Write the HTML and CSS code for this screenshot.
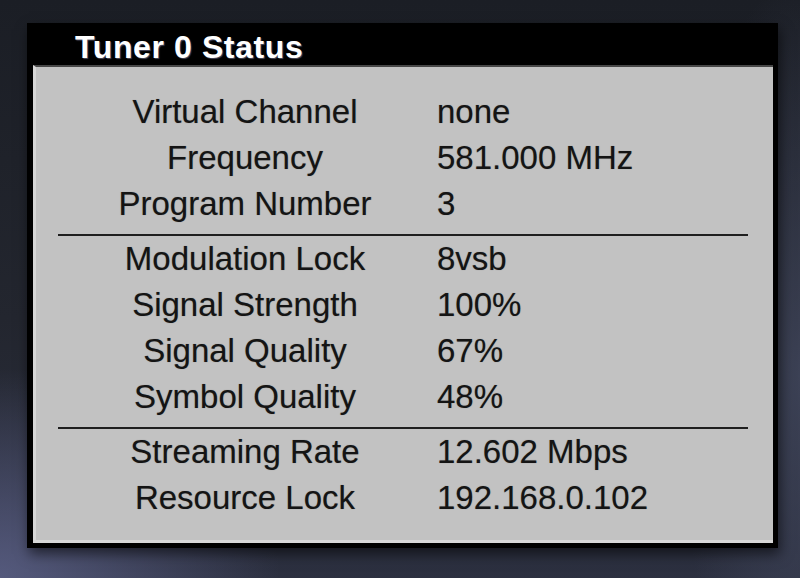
FILE: index.html
```html
<!DOCTYPE html>
<html lang="en">
<head>
    <meta charset="UTF-8">
    <meta name="viewport" content="width=device-width, initial-scale=1.0">
    <title>Tuner 0 Status</title>
    <link rel="stylesheet" href="styles.css">
</head>
<body>
    <div class="panel">
        <div class="panel-title">Tuner 0 Status</div>
        <div class="panel-body">
            <div class="status-grid">
                <div class="label">Virtual Channel</div><div class="value">none</div>
                <div class="label">Frequency</div><div class="value">581.000 MHz</div>
                <div class="label">Program Number</div><div class="value">3</div>
            </div>
            <div class="divider"></div>
            <div class="status-grid">
                <div class="label">Modulation Lock</div><div class="value">8vsb</div>
                <div class="label">Signal Strength</div><div class="value">100%</div>
                <div class="label">Signal Quality</div><div class="value">67%</div>
                <div class="label">Symbol Quality</div><div class="value">48%</div>
            </div>
            <div class="divider"></div>
            <div class="status-grid">
                <div class="label">Streaming Rate</div><div class="value">12.602 Mbps</div>
                <div class="label">Resource Lock</div><div class="value">192.168.0.102</div>
            </div>
        </div>
    </div>
</body>
</html>
```

FILE: styles.css
```css
* {
    margin: 0;
    padding: 0;
    box-sizing: border-box;
}
html, body {
    height: 100%;
}
body {
    font-family: 'Liberation Sans', Arial, sans-serif;
    background:
        radial-gradient(ellipse 280px 210px at 0% 100%, rgba(95, 100, 140, 0.8), transparent),
        radial-gradient(ellipse 120px 400px at 100% 65%, rgba(70, 76, 100, 0.7), transparent),
        linear-gradient(180deg, #1b1e25 0%, #23262f 55%, #2c3040 100%);
    padding: 23px 0 0 27px;
    overflow: hidden;
}
.panel {
    width: 751px;
    background: #000;
    padding: 0 5px 5px 6px;
    box-shadow: 2px 6px 12px rgba(0, 0, 0, 0.55);
}
.panel-title {
    height: 42px;
    padding: 6px 0 0 42px;
    line-height: 36px;
    font-size: 32px;
    font-weight: bold;
    color: #fff;
    letter-spacing: 0.6px;
    text-shadow: 1px 1px 1px rgba(150, 150, 190, 0.5);
}
.panel-body {
    background: #c2c2c2;
    border-top: 2px solid #474747;
    border-left: 3px solid #d6d6d6;
    border-bottom: 3px solid #d8d8d8;
    padding: 22px 25px 19px 22px;
}
.status-grid {
    display: grid;
    grid-template-columns: 374px 1fr;
    font-size: 33px;
    line-height: 46px;
    color: #141414;
    text-shadow: 0 0 1px rgba(0, 0, 0, 0.35);
}
.label {
    text-align: center;
}
.value {
    padding-left: 5px;
}
.divider {
    margin-top: 7px;
    height: 2px;
    background: #1e1e1e;
}
```
